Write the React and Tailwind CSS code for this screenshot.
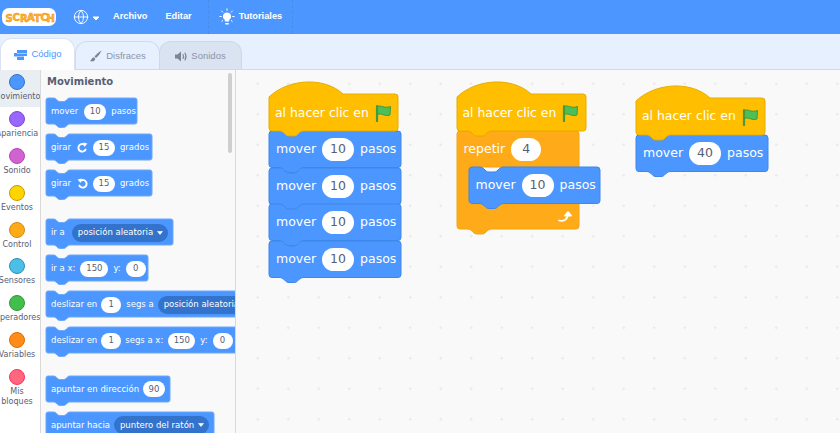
import React from "react";
import { Globe } from "lucide-react";

const notchTop = (s) =>
  `L${11 * s} 0 Q${13 * s} 0 ${15 * s} ${2 * s} L${17 * s} ${4 * s} Q${18 * s} ${5 * s} ${20 * s} ${5 * s} L${25 * s} ${5 * s} Q${27 * s} ${5 * s} ${28 * s} ${4 * s} L${30 * s} ${2 * s} Q${32 * s} 0 ${34 * s} 0`;
const tabBottom = (s, h, x = 0) =>
  `L${x + 34 * s} ${h} Q${x + 32 * s} ${h} ${x + 30 * s} ${h + 2 * s} L${x + 28 * s} ${h + 4 * s} Q${x + 27 * s} ${h + 5 * s} ${x + 25 * s} ${h + 5 * s} L${x + 20 * s} ${h + 5 * s} Q${x + 18 * s} ${h + 5 * s} ${x + 17 * s} ${h + 4 * s} L${x + 15 * s} ${h + 2 * s} Q${x + 13 * s} ${h} ${x + 11 * s} ${h}`;

function stackPath(w, h, s) {
  const r = 3 * s;
  return `M0 ${r} Q0 0 ${r} 0 ${notchTop(s)} L${w - r} 0 Q${w} 0 ${w} ${r} L${w} ${h - r} Q${w} ${h} ${w - r} ${h} ${tabBottom(s, h)} L${r} ${h} Q0 ${h} 0 ${h - r} Z`;
}
function hatPath(w, h) {
  return `M0 15 C20 -4 56 -5 74 12 L${w - 3} 12 Q${w} 12 ${w} 15 L${w} ${h - 3} Q${w} ${h} ${w - 3} ${h} ${tabBottom(1, h)} L3 ${h} Q0 ${h} 0 ${h - 3} Z`;
}

function Shape({ d, fill, stroke, w, h }) {
  return (
    <svg
      className="absolute left-0 top-0 overflow-visible"
      width={w}
      height={h}
      viewBox={`0 0 ${w} ${h}`}
    >
      <path d={d} fill={fill} stroke={stroke} strokeWidth="1" />
    </svg>
  );
}

function Flag() {
  return (
    <svg width="17" height="18" viewBox="0 0 17 18" className="shrink-0">
      <path
        d="M2.5 2.5C6 0.5 9 5 15.5 2.5L15 11C9.5 13 6.5 8.5 2.5 10.5Z"
        fill="#4cbf56"
        stroke="#45993d"
        strokeWidth="1"
        strokeLinejoin="round"
      />
      <path d="M2 2V17" stroke="#45993d" strokeWidth="2.2" strokeLinecap="round" />
    </svg>
  );
}

/* workspace pieces */
function Pill({ children, cls = "w-[32px]" }) {
  return (
    <span className={`flex h-[23px] items-center justify-center rounded-full bg-white text-[12.5px] text-[#575e75] ${cls}`}>
      {children}
    </span>
  );
}
function Mover({ n = 10, w = 132, cls = "w-[132px]" }) {
  return (
    <div className={`relative h-[36.5px] ${cls}`}>
      <Shape d={stackPath(w, 36.5, 1)} fill="#4c97ff" stroke="#3f87ea" w={w} h={36} />
      <div className="relative flex h-full items-center gap-[6px] pl-[7px] pt-[1px] text-[12.5px] text-white">
        <span>mover</span>
        <Pill>{n}</Pill>
        <span>pasos</span>
      </div>
    </div>
  );
}
function Hat({ w, cls }) {
  return (
    <div className={`relative z-10 h-[49px] ${cls}`}>
      <Shape d={hatPath(w, 49)} fill="#ffbf00" stroke="#e6ac00" w={w} h={49} />
      <div className="relative flex h-full items-center gap-[6px] whitespace-nowrap pl-[6px] pt-[13px] text-[12.4px] text-white">
        <span>al hacer clic en</span>
        <Flag />
      </div>
    </div>
  );
}
function Repeat() {
  const w = 122;
  const d = `M0 3 Q0 0 3 0 ${notchTop(1)} L${w - 3} 0 Q${w} 0 ${w} 3 L${w} 36 L12 36 L12 73 L${w} 73 L${w} 95 Q${w} 98 ${w - 3} 98 ${tabBottom(1, 98)} L3 98 Q0 98 0 95 Z`;
  return (
    <div className="relative h-[98px] w-[122px]">
      <Shape d={d} fill="#ffab19" stroke="#f5a215" w={w} h={98} />
      <div className="relative flex h-[36px] items-center gap-[6px] pl-[7px] pt-[1px] text-[12.5px] text-white">
        <span>repetir</span>
        <Pill cls="w-[30px]">4</Pill>
      </div>
      <div className="relative ml-[12px]">
        <Mover w={131} cls="w-[131px]" />
      </div>
      <div className="relative flex h-[25px] items-center justify-end pr-[7px] pt-[1px]">
        <svg width="14" height="13" viewBox="0 0 14 13" fill="none" stroke="#fff" strokeWidth="1.8" strokeLinecap="round" strokeLinejoin="round">
          <path d="M1 10.5C5 11.5 9.5 10.5 10 4" />
          <path d="M7 5.5L10 2L13 5.5Z" fill="#fff" />
        </svg>
      </div>
    </div>
  );
}

/* palette pieces */
function PPill({ children, cls = "w-[22px]" }) {
  return (
    <span className={`flex h-[16px] items-center justify-center rounded-full bg-white text-[8.5px] text-[#575e75] ${cls}`}>
      {children}
    </span>
  );
}
function PDrop({ children }) {
  return (
    <span className="flex h-[18px] shrink-0 items-center gap-[4px] rounded-full bg-[#3373cc] pl-[6px] pr-[5px] text-[8.5px] text-white">
      {children}
      <svg width="6" height="4" viewBox="0 0 6 4">
        <path d="M0.5 0.5H5.5L3 3.5Z" fill="#fff" stroke="#fff" strokeWidth="0.6" strokeLinejoin="round" />
      </svg>
    </span>
  );
}
function PBlock({ w, cls, children, mt = "mt-[10px]" }) {
  return (
    <div className={`relative h-[26px] shrink-0 ${cls} ${mt}`}>
      <Shape d={stackPath(w, 26, 0.7)} fill="#4c97ff" stroke="#6ca9fb" w={w} h={26} />
      <div className="relative flex h-full items-center whitespace-nowrap pl-[5px] pt-[1px] text-[8.5px] text-white">
        {children}
      </div>
    </div>
  );
}
function Turn({ flip }) {
  return (
    <svg width="11" height="11" viewBox="0 0 11 11" fill="none" className={flip ? "-scale-x-100" : ""}>
      <path d="M8.6 7.5A3.8 3.8 0 1 1 7.2 2.6" stroke="#fff" strokeWidth="1.9" strokeLinecap="round" />
      <path d="M6.3 0.4L10.4 1.6L7.4 5Z" fill="#fff" />
    </svg>
  );
}

const cats = [
  ["Movimiento", "bg-[#4c97ff] border-[#3373cc]"],
  ["Apariencia", "bg-[#9966ff] border-[#774dcb]"],
  ["Sonido", "bg-[#cf63cf] border-[#bd42bd]"],
  ["Eventos", "bg-[#ffd500] border-[#cc9900]"],
  ["Control", "bg-[#ffab19] border-[#cf8b17]"],
  ["Sensores", "bg-[#4cbfe6] border-[#2e8eb8]"],
  ["Operadores", "bg-[#40bf4a] border-[#389438]"],
  ["Variables", "bg-[#ff8c1a] border-[#db6e00]"],
  ["Mis bloques", "bg-[#ff6680] border-[#ff3355]"],
];

export default function App() {
  return (
    <div className="flex h-[433px] w-[840px] flex-col overflow-hidden bg-[#e6f0ff] font-['DejaVu_Sans',sans-serif]">
      {/* header */}
      <header className="flex h-[34px] shrink-0 items-center bg-[#4c97ff] font-['Liberation_Sans',sans-serif] text-[9.25px] font-bold text-white">
        <svg width="54" height="20" viewBox="0 0 54 20" className="ml-[2px] overflow-visible">
          <rect x="0" y="1" width="54" height="18" rx="7" fill="#fff" />
          <text
            x="3.5 10.5 18 25 32 38.5 44.5"
            y="15 14 15 13.5 15 14 15"
            fontFamily="'DejaVu Sans', sans-serif"
            fontWeight="700"
            fontSize="10"
            fill="#ffb640"
            stroke="#ef8a00"
            strokeWidth="0.5"
          >
            SCRATCH
          </text>
        </svg>
        <Globe className="ml-[17px]" size={16} strokeWidth={1.4} color="#fff" />
        <svg width="8" height="5" viewBox="0 0 8 5" className="ml-[3px] mt-[2px]">
          <path d="M1 1H7L4 4Z" fill="#fff" stroke="#fff" strokeLinejoin="round" />
        </svg>
        <span className="ml-[13px]">Archivo</span>
        <span className="ml-[18px]">Editar</span>
        <div className="ml-[16px] h-full border-l border-dashed border-[#4a8de8]" />
        <svg width="16" height="18" viewBox="0 0 16 18" className="ml-[10px]">
          <path d="M8 4.5A4 4 0 0 0 5.7 11.8L6 13.5H10L10.3 11.8A4 4 0 0 0 8 4.5Z" fill="#fff" />
          <path d="M6.3 15H9.7V16.5H6.3Z" fill="#fff" />
          <path d="M8 .8V2.4M2.6 3L3.7 4.1M13.4 3L12.3 4.1M.8 8.5H2.3M13.7 8.5H15.2M2.8 13.4L3.8 12.5M13.2 13.4L12.2 12.5" stroke="#fff" strokeWidth="1" strokeLinecap="round" />
        </svg>
        <span className="ml-[4px]">Tutoriales</span>
        <div className="ml-[10px] h-full border-l border-dashed border-[#4a8de8]" />
      </header>

      {/* tabs */}
      <nav className="flex h-[36px] shrink-0 items-end border-b border-[#d9d9d9] font-['Liberation_Sans',sans-serif] text-[9.5px]">
        <div className="z-20 -mb-px flex h-[32px] w-[75px] items-center justify-center gap-[3px] rounded-t-[12px] border border-b-0 border-[#d9e3f2] bg-white text-[#4c97ff]">
          <svg width="15" height="10" viewBox="0 0 15 10">
            <path d="M1 0H14V3H1ZM4 3.5H14V6H4ZM1 6.5H11V10H1ZM1 0V10H4V0Z" fill="#4c97ff" />
          </svg>
          <span>Código</span>
        </div>
        <div className="flex h-[28px] w-[85px] items-center justify-center gap-[4px] rounded-t-[12px] border border-b-0 border-[#d0dbeb] bg-[#e6f0ff] pt-[1px] text-[#8d95a8]">
          <svg width="13" height="13" viewBox="0 0 13 13">
            <path d="M12.5 .5C10 2 7 4.5 5.5 6.5L7 8C9 6.5 11.5 3 12.5 .5Z" fill="#7d8494" />
            <path d="M4.8 7.3C3 7.5 3 9.5 1 11C3 12 6 11.5 6.3 8.8Z" fill="#7d8494" />
          </svg>
          <span>Disfraces</span>
        </div>
        <div className="-ml-px flex h-[28px] w-[83px] items-center justify-center gap-[3px] rounded-t-[12px] border border-b-0 border-[#cfd8e6] bg-[#d9e3f2] pt-[1px] text-[#8d95a8]">
          <svg width="13" height="11" viewBox="0 0 13 11" fill="none">
            <path d="M0 3.5H2.5L6 .5V10.5L2.5 7.5H0Z" fill="#7d8494" />
            <path d="M8 3.5Q9.2 5.5 8 7.5M10 2Q12 5.5 10 9" stroke="#7d8494" strokeWidth="1.1" strokeLinecap="round" />
          </svg>
          <span>Sonidos</span>
        </div>
      </nav>

      {/* main */}
      <main className="flex min-h-0 flex-1">
        {/* categories */}
        <aside className="flex w-[41px] shrink-0 flex-col overflow-hidden border-r border-[#d9d9d9] bg-white text-[8px] text-[#575e75]">
          {cats.map(([label, c], i) => (
            <div
              key={label}
              className={`flex h-[36.9px] shrink-0 flex-col items-start pt-[4px] ${i === 0 ? "bg-[#e9eef2]" : ""}`}
            >
              <div className="flex w-[34px] flex-col items-center">
                <span className={`h-[16px] w-[16px] shrink-0 rounded-full border ${c}`} />
                <span className="mt-[2px] flex w-[34px] justify-center whitespace-nowrap text-center leading-[10px]">
                  {label === "Mis bloques" ? (
                    <span>Mis<br />bloques</span>
                  ) : (
                    label
                  )}
                </span>
              </div>
            </div>
          ))}
        </aside>

        {/* palette */}
        <section className="relative flex w-[195px] shrink-0 flex-col overflow-hidden border-r border-[#d9d9d9] bg-[#f9f9f9] pl-[5px] text-[#575e75]">
          <div className="mt-[6px] pl-px text-[10px] font-bold leading-[12px]">Movimiento</div>
          <PBlock w={91} cls="w-[91px]">
            <span>mover</span>
            <span className="ml-[6px]"><PPill>10</PPill></span>
            <span className="ml-[5px]">pasos</span>
          </PBlock>
          <PBlock w={106} cls="w-[106px]">
            <span>girar</span>
            <span className="ml-[6px]"><Turn /></span>
            <span className="ml-[5px]"><PPill>15</PPill></span>
            <span className="ml-[5px]">grados</span>
          </PBlock>
          <PBlock w={106} cls="w-[106px]">
            <span>girar</span>
            <span className="ml-[6px]"><Turn flip /></span>
            <span className="ml-[5px]"><PPill>15</PPill></span>
            <span className="ml-[5px]">grados</span>
          </PBlock>
          <PBlock w={127} cls="w-[127px]" mt="mt-[23px]">
            <span>ir a</span>
            <span className="ml-[7px]"><PDrop>posición aleatoria</PDrop></span>
          </PBlock>
          <PBlock w={102} cls="w-[102px]">
            <span>ir a x:</span>
            <span className="ml-[5px]"><PPill cls="w-[28px]">150</PPill></span>
            <span className="ml-[5px]">y:</span>
            <span className="ml-[5px]"><PPill cls="w-[20px]">0</PPill></span>
          </PBlock>
          <PBlock w={200} cls="w-[200px]">
            <span>deslizar en</span>
            <span className="ml-[4px]"><PPill cls="w-[20px]">1</PPill></span>
            <span className="ml-[5px]">segs a</span>
            <span className="ml-[4px]"><PDrop>posición aleatoria</PDrop></span>
          </PBlock>
          <PBlock w={200} cls="w-[200px]">
            <span>deslizar en</span>
            <span className="ml-[4px]"><PPill cls="w-[20px]">1</PPill></span>
            <span className="ml-[4px]">segs a x:</span>
            <span className="ml-[5px]"><PPill cls="w-[27px]">150</PPill></span>
            <span className="ml-[5px]">y:</span>
            <span className="ml-[5px]"><PPill cls="w-[20px]">0</PPill></span>
          </PBlock>
          <PBlock w={124} cls="w-[124px]" mt="mt-[22.5px]">
            <span>apuntar en dirección</span>
            <span className="ml-[4px]"><PPill>90</PPill></span>
          </PBlock>
          <PBlock w={168} cls="w-[168px]">
            <span>apuntar hacia</span>
            <span className="ml-[4px]"><PDrop>puntero del ratón</PDrop></span>
          </PBlock>
          {/* scrollbar */}
          <div className="absolute left-[187px] top-[3px] h-[80px] w-[4px] rounded-full bg-[#cfcfcf]" />
        </section>

        {/* workspace */}
        <section className="relative flex-1 overflow-hidden bg-[#f9f9f9] bg-[radial-gradient(circle,#e9e9e9_1px,transparent_1.2px)] bg-size-[30.5px_30.5px] bg-position-[6.5px_-1.5px]">
          <div className="absolute left-[33px] top-[12px] flex flex-col">
            <Hat w={129} cls="w-[129px]" />
            <Mover />
            <Mover />
            <Mover />
            <Mover />
          </div>
          <div className="absolute left-[220.5px] top-[12px] flex flex-col">
            <Hat w={129} cls="w-[129px]" />
            <Repeat />
          </div>
          <div className="absolute left-[400px] top-[15.5px] flex flex-col">
            <Hat w={129} cls="w-[129px]" />
            <Mover n={40} />
          </div>
        </section>
      </main>
    </div>
  );
}
